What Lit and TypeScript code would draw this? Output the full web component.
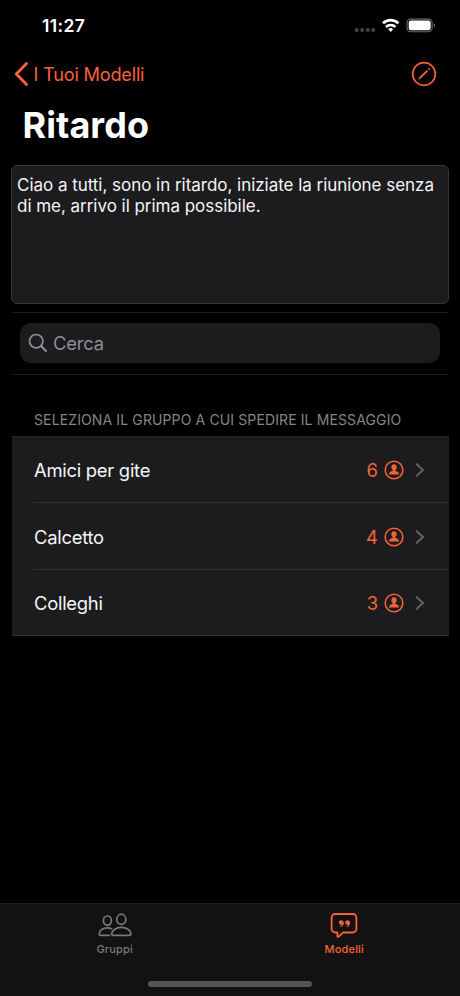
import { LitElement, html, css, svg } from "lit";
import { customElement, property, state } from "lit/decorators.js";

@customElement("status-bar")
class StatusBar extends LitElement {
  static styles = css`
    :host { display: flex; height: 50px; justify-content: space-between; padding: 0 24px 0 42px; box-sizing: border-box; }
    .time { font-weight: 600; font-size: 17.4px; line-height: 20px; margin-top: 15.5px; letter-spacing: 0.4px; color: #fff; }
    svg { display: block; margin-top: 14px; }
  `;
  render() {
    return html`<span class="time">11:27</span>
      <svg width="82" height="22" viewBox="354 14 82 22">
        <g fill="#454547">
          <circle cx="356.7" cy="30" r="2" /><circle cx="362.2" cy="30" r="2" />
          <circle cx="367.7" cy="30" r="2" /><circle cx="373.2" cy="30" r="2" />
        </g>
        <g fill="none" stroke="#fff" stroke-width="2.7">
          <path d="M383 23.2a11 11 0 0 1 15.4 0" />
          <path d="M386 26.9a6.8 6.8 0 0 1 9.4 0" />
        </g>
        <path d="M388.2 29.2a3.7 3.7 0 0 1 5 0l-2.5 2.7z" fill="#fff" />
        <rect x="407.1" y="19.1" width="25" height="12.6" rx="3.6" fill="none" stroke="#6a6a6c" stroke-width="1.1" />
        <rect x="408.7" y="20.6" width="22" height="9.6" rx="2.2" fill="#fff" />
        <path d="M433.8 23.3v4.2c1.8-.6 1.8-3.6 0-4.2z" fill="#6a6a6c" />
      </svg>`;
  }
}

@customElement("group-row")
class GroupRow extends LitElement {
  @property() name = "";
  @property({ type: Number }) members = 0;
  static styles = css`
    :host { display: flex; align-items: center; box-sizing: border-box; height: 67px; margin-left: 21px; padding: 1px 24px 0 1px; font-size: 18.4px; line-height: 24px; color: #f5f5f5; border-bottom: 1px solid #303032; }
    :host(:last-of-type) { height: 66px; border-bottom-color: transparent; }
    .name { flex: 1; letter-spacing: -0.26px; }
    .count { color: #f8623a; margin-right: 6px; }
    svg { display: block; }
    .chevron { margin-left: 11px; }
  `;
  render() {
    return html`<span class="name">${this.name}</span>
      <span class="count">${this.members}</span>
      <svg width="20" height="20" viewBox="0 0 20 20">
        <circle cx="10" cy="10" r="8.8" fill="none" stroke="#f8623a" stroke-width="1.6" />
        <ellipse cx="10" cy="7.2" rx="2.6" ry="3" fill="#f8623a" />
        <path d="M8.9 9h2.2v1.7c2.300.3 3.900 1.600 3.900 3.900H5c0-2.300 1.600-3.600 3.900-3.900z" fill="#f8623a" />
      </svg>
      <svg class="chevron" width="10" height="16" viewBox="0 0 10 16">
        <path d="M1.7 2.2 8 8 1.7 13.8" fill="none" stroke="#606064" stroke-width="2.1" stroke-linecap="round" stroke-linejoin="round" />
      </svg>`;
  }
}

const groupsIcon = svg`
  <g fill="none" stroke="currentColor" stroke-width="1.7" stroke-linejoin="round">
    <ellipse cx="9.4" cy="7.6" rx="4" ry="4.6" />
    <ellipse cx="23.3" cy="6.3" rx="4.5" ry="5.1" />
    <path d="M14.1 16.1c-1.3-.9-3-1.3-4.9-1.3-4.6 0-8 3-8 6.2 0 .9.5 1.4 1.5 1.4h9.6" />
    <path d="M15.4 22.4c-1 0-1.8-.4-1.8-1.3 0-3.3 4.1-6.7 9.7-6.7s9.7 3.4 9.7 6.7c0 .9-.8 1.3-1.8 1.3z" />
  </g>`;

const quoteMark = (x: number) => svg`
  <path transform="translate(${x} 7.2)" d="M2.3 0c1.6 0 2.600 1.200 2.600 2.800 0 2-1.400 3.600-3.300 4-.5.1-.7-.5-.2-.7.9-.4 1.500-.9 1.700-1.600-.2.1-.5.2-.9.2C.9 4.700 0 3.700 0 2.400 0 1 1 0 2.300 0z" />`;

const templatesIcon = svg`
  <path d="M8.100 1h17.800a3.500 3.500 0 0 1 3.500 3.500V16a3.500 3.500 0 0 1-3.500 3.500H16.200l-4.500 4.100c-.7.6-1.300.4-1.300-.5v-3.600H8.100A3.500 3.500 0 0 1 4.600 16V4.500A3.500 3.500 0 0 1 8.100 1z"
    fill="none" stroke="currentColor" stroke-width="1.8" stroke-linejoin="round" />
  <g fill="currentColor">${quoteMark(11.9)}${quoteMark(18.2)}</g>`;

@customElement("app-root")
class AppRoot extends LitElement {
  @state() groups = [
    { name: "Amici per gite", members: 6 },
    { name: "Calcetto", members: 4 },
    { name: "Colleghi", members: 3 },
  ];
  static styles = css`
    :host { display: flex; flex-direction: column; width: 460px; height: 996px; overflow: hidden; background: #000; color: #fff; font-family: Inter, "Liberation Sans", sans-serif; }
    svg { display: block; }
    nav { display: flex; align-items: center; height: 48px; padding: 0 23px 0 14px; color: #f8623a; }
    .back { flex: 1; font-size: 18.2px; line-height: 24px; margin-left: 4.5px; letter-spacing: -0.22px; }
    h1 { margin: 0; padding-left: 22.5px; height: 67px; font-size: 36px; line-height: 54px; font-weight: 700; letter-spacing: 0.05px; }
    .message { box-sizing: border-box; height: 139px; margin: 0 11px; padding: 9px 5px; border: 1px solid #363638; border-radius: 6px; background: #1c1c1e; color: #f5f5f5; font-size: 17px; line-height: 21px; letter-spacing: -0.03px; white-space: nowrap; }
    .search-area { box-sizing: border-box; height: 63px; margin: 8px 12px 0; padding: 10px 8px 0; border-top: 1px solid #1d1d1f; border-bottom: 1px solid #1d1d1f; }
    .search { display: flex; align-items: center; height: 40px; box-sizing: border-box; padding-left: 8px; gap: 5px; border-radius: 11px; background: #1c1c1e; color: #8e8e93; font-size: 18.4px; letter-spacing: -0.2px; }
    h2 { margin: 35px 0 0 34px; height: 26px; font-size: 14px; line-height: 20px; font-weight: 400; letter-spacing: 0.12px; color: #85858a; white-space: nowrap; }
    .groups { box-sizing: border-box; height: 200px; margin: 0 11px 0 12px; background: #1c1c1e; box-shadow: inset 0 1px #262628, inset 0 -1px #303032; }
    .tabs { display: grid; grid-template-columns: 1fr 1fr; box-sizing: border-box; height: 78px; margin-top: auto; padding: 9px 1px 0 0; background: #121212; border-top: 1px solid #202022; }
    .tab { display: flex; flex-direction: column; align-items: center; font-size: 11px; line-height: 14px; font-weight: 500; letter-spacing: 0.2px; color: #79797b; gap: 4px; }
    .tab.active { color: #f8623a; }
    .home { display: flex; justify-content: center; height: 15px; background: #121212; }
    .home span { width: 164px; height: 6px; border-radius: 3px; background: #555556; }
  `;
  render() {
    return html`
      <status-bar></status-bar>
      <nav>
        <svg width="15" height="26" viewBox="0 0 15 26"><path d="M12.5 2.5 2.3 13l10.2 10.5" fill="none" stroke="currentColor" stroke-width="2.9" stroke-linecap="round" stroke-linejoin="round" /></svg>
        <span class="back">I Tuoi Modelli</span>
        <svg width="26" height="26" viewBox="0 0 26 26">
          <circle cx="13" cy="13" r="11.3" fill="none" stroke="currentColor" stroke-width="1.7" />
          <path d="m9 16.9 7.4-7.3" fill="none" stroke="currentColor" stroke-width="2" />
          <path d="m7.3 18.7.8-2.6 1.7 1.7zM16.9 7.9l.6-.6c.8-.7 2 .5 1.3 1.3l-.6.6z" fill="currentColor" />
        </svg>
      </nav>
      <h1>Ritardo</h1>
      <div class="message">Ciao a tutti, sono in ritardo, iniziate la riunione senza<br />di me, arrivo il prima possibile.</div>
      <div class="search-area">
        <div class="search">
          <svg width="20" height="20" viewBox="0 0 20 20"><g fill="none" stroke="currentColor" stroke-linecap="round"><circle cx="8.2" cy="8.2" r="6.7" stroke-width="1.7" /><path d="m13.2 13.2 4.8 4.8" stroke-width="2.1" /></g></svg>
          <span>Cerca</span>
        </div>
      </div>
      <h2>SELEZIONA IL GRUPPO A CUI SPEDIRE IL MESSAGGIO</h2>
      <div class="groups">
        ${this.groups.map((g) => html`<group-row .name=${g.name} .members=${g.members}></group-row>`)}
      </div>
      <div class="tabs">
        <div class="tab"><svg width="34" height="25" viewBox="0 0 34 25">${groupsIcon}</svg><span>Gruppi</span></div>
        <div class="tab active"><svg width="34" height="25" viewBox="0 0 34 25">${templatesIcon}</svg><span>Modelli</span></div>
      </div>
      <div class="home"><span></span></div>
    `;
  }
}
